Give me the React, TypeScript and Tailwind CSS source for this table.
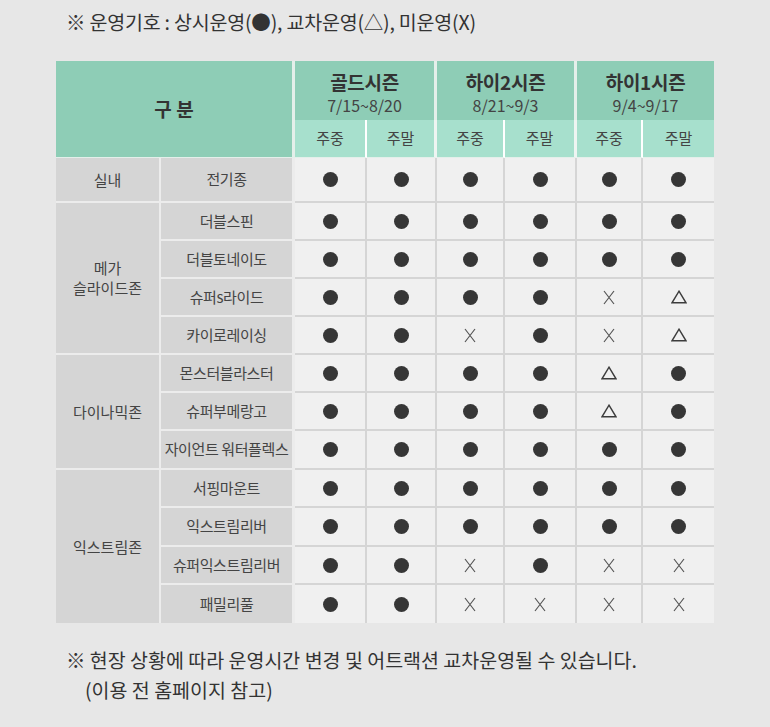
import React from "react";

type Sym = "o" | "x" | "t";

const FONT = { fontFamily: '"Noto Sans CJK KR", "Noto Sans", sans-serif' };

function Symbol({ s }: { s: Sym }) {
  if (s === "o") {
    return <span className="inline-block w-[15px] h-[15px] rounded-full bg-[#363636] align-middle" />;
  }
  if (s === "x") {
    return (
      <svg width="12" height="15" viewBox="0 0 12 15" className="inline-block align-middle">
        <path d="M1 1 L11 14 M11 1 L1 14" stroke="#555" strokeWidth="1.2" fill="none" />
      </svg>
    );
  }
  return (
    <svg width="16" height="14" viewBox="0 0 16 14" className="inline-block align-middle">
      <path d="M8 1.2 L15 12.8 L1 12.8 Z" stroke="#3c3c3c" strokeWidth="1.4" fill="none" strokeLinejoin="miter" />
    </svg>
  );
}

type Row = { zone?: { name: React.ReactNode; span: number }; name: string; v: Sym[]; h: string };

const rows: Row[] = [
  { zone: { name: "실내", span: 1 }, name: "전기종", v: ["o", "o", "o", "o", "o", "o"], h: "h-[45px]" },
  { zone: { name: <>메가<br />슬라이드존</>, span: 4 }, name: "더블스핀", v: ["o", "o", "o", "o", "o", "o"], h: "h-[38px]" },
  { name: "더블토네이도", v: ["o", "o", "o", "o", "o", "o"], h: "h-[38px]" },
  { name: "슈퍼s라이드", v: ["o", "o", "o", "o", "x", "t"], h: "h-[38px]" },
  { name: "카이로레이싱", v: ["o", "o", "x", "o", "x", "t"], h: "h-[38px]" },
  { zone: { name: "다이나믹존", span: 3 }, name: "몬스터블라스터", v: ["o", "o", "o", "o", "t", "o"], h: "h-[38px]" },
  { name: "슈퍼부메랑고", v: ["o", "o", "o", "o", "t", "o"], h: "h-[38px]" },
  { name: "자이언트 워터플렉스", v: ["o", "o", "o", "o", "o", "o"], h: "h-[39px]" },
  { zone: { name: "익스트림존", span: 4 }, name: "서핑마운트", v: ["o", "o", "o", "o", "o", "o"], h: "h-[38px]" },
  { name: "익스트림리버", v: ["o", "o", "o", "o", "o", "o"], h: "h-[39px]" },
  { name: "슈퍼익스트림리버", v: ["o", "o", "x", "o", "x", "x"], h: "h-[38px]" },
  { name: "패밀리풀", v: ["o", "o", "x", "x", "x", "x"], h: "h-[38px]" },
];

const seasons = [
  { name: "골드시즌", date: "7/15~8/20" },
  { name: "하이2시즌", date: "8/21~9/3" },
  { name: "하이1시즌", date: "9/4~9/17" },
];

export default function App() {
  return (
    <div className="w-[770px] h-[727px] bg-[#e7e7e7] text-[#333] overflow-hidden" style={FONT}>
      <div className="pt-[9px] pl-[66px] text-[19.5px] leading-[26px] text-[#333] tracking-[-0.2px] whitespace-nowrap">
        ※ 운영기호 : 상시운영(●), 교차운영(△), 미운영(X)
      </div>
      <div className="mt-[26px] ml-[56px]">
        <table className="table-fixed w-[658px] border-separate border-spacing-0">
          <colgroup>
            <col className="w-[105px]" />
            <col className="w-[134px]" />
            <col className="w-[72px]" />
            <col className="w-[70px]" />
            <col className="w-[68px]" />
            <col className="w-[72px]" />
            <col className="w-[66px]" />
            <col className="w-[71px]" />
          </colgroup>
          <thead>
            <tr className="h-[59px]">
              <th
                colSpan={2}
                rowSpan={2}
                className="p-0 bg-[#8ecdb6] border-r-[3px] border-b border-[#e4efea] text-[19px] font-bold text-[#333] align-middle"
              >
                구 분
              </th>
              {seasons.map((s, i) => (
                <th
                  key={s.name}
                  colSpan={2}
                  className={`p-0 bg-[#8ecdb6] align-middle ${i < 2 ? "border-r-[3px] border-[#e4efea]" : ""}`}
                >
                  <div className="pt-[4px] text-[19px] leading-[24px] font-bold text-[#333] tracking-[-0.3px]">{s.name}</div>
                  <div className="text-[16px] leading-[22px] font-normal text-[#444]">{s.date}</div>
                </th>
              ))}
            </tr>
            <tr className="h-[38px]">
              {[0, 1, 2, 3, 4, 5].map((i) => (
                <th
                  key={i}
                  className={`p-0 bg-[#a7e0cd] border-b border-[#e4efea] text-[15px] font-normal text-[#444] align-middle ${
                    i === 5 ? "" : i % 2 === 0 ? "border-r-2 border-r-white" : "border-r-[3px] border-r-[#eef5f2]"
                  }`}
                >
                  {i % 2 === 0 ? "주중" : "주말"}
                </th>
              ))}
            </tr>
          </thead>
          <tbody>
            {rows.map((r, ri) => {
              const last = ri === rows.length - 1;
              return (
                <tr key={r.name} className={r.h}>
                  {r.zone && (
                    <td
                      rowSpan={r.zone.span}
                      className={`p-0 bg-[#d5d5d5] border-r-2 border-[#ececec] text-center align-middle text-[15px] leading-[20px] text-[#444] ${
                        ri + r.zone.span >= rows.length ? "" : "border-b-2"
                      }`}
                    >
                      {r.zone.name}
                    </td>
                  )}
                  <td
                    className={`p-0 bg-[#d5d5d5] border-r-[3px] border-[#ececec] text-center align-middle text-[15px] text-[#444] whitespace-nowrap tracking-[-0.4px] ${
                      last ? "" : "border-b-2"
                    }`}
                  >
                    {r.name}
                  </td>
                  {r.v.map((s, ci) => (
                    <td
                      key={ci}
                      className={`p-0 bg-[#f0f0f0] border-[#d5d5d5] text-center align-middle ${last ? "" : "border-b-2"} ${
                        ci === 5 ? "" : "border-r-2"
                      }`}
                    >
                      <div className="flex items-center justify-center">
                        <Symbol s={s} />
                      </div>
                    </td>
                  ))}
                </tr>
              );
            })}
          </tbody>
        </table>
      </div>
      <div className="mt-[22px] pl-[66px] text-[19.5px] leading-[30px] text-[#333] whitespace-nowrap">
        <div>※ 현장 상황에 따라 운영시간 변경 및 어트랙션 교차운영될 수 있습니다.</div>
        <div className="pl-[19px]">(이용 전 홈페이지 참고)</div>
      </div>
    </div>
  );
}
